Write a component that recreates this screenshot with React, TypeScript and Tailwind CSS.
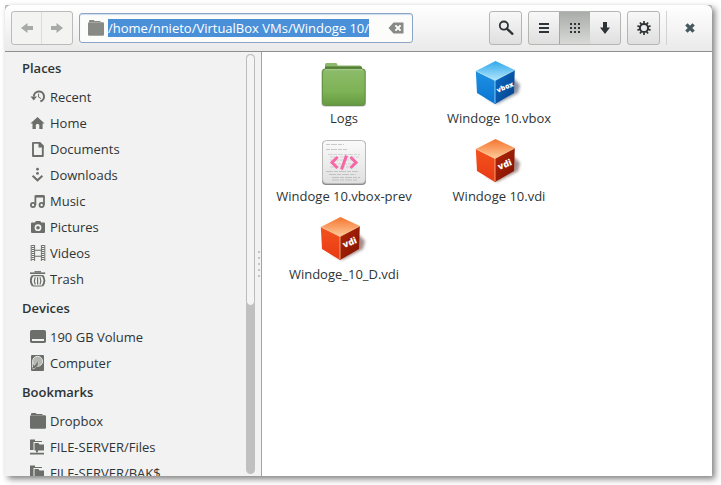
import React, { useEffect, useRef } from "react";

const svg16 = { width: 16, height: 16, viewBox: "0 0 16 16", fill: "none", "aria-hidden": true } as const;

const FolderIcon = ({ color = "#6b6e69" }: { color?: string }) => (
  <svg {...svg16} fill={color}>
    <path d="M1 1.2Q1 0 2 0H5.5Q6.3 0 6.5 1H12.5V2H1Z" />
    <rect y="2.3" width="16" height="13.5" rx="1.2" />
  </svg>
);

const ServerFolderIcon = () => (
  <svg {...svg16} fill="#6b6e69">
    <path d="M0 .5H5V2H12V3H3.5V11H0Z" />
    <path d="M4.5 4H8.5L9.5 5.5H14V11.5H4.5Z" />
    <path d="M6 11H8V13.3H6ZM0 13.8H14V15.6H0Z" />
  </svg>
);

const RecentIcon = () => (
  <svg {...svg16} stroke="#6b6e69">
    <path d="M3.8 7.6A5.1 5.1 0 1 1 10.3 12.4" strokeWidth="2" />
    <path d="M.5 7.4H7L3.7 11.6Z" fill="#6b6e69" stroke="none" />
    <path d="M8.6 4.6V8.2L11 9.5" strokeWidth="1" />
  </svg>
);

const HomeIcon = () => (
  <svg {...svg16} fill="#6b6e69">
    <path d="M7.5 2L14.6 8.4H12.6V14H9.3V10Q9.3 9 7.5 9Q5.8 9 5.8 10V14H2.5V8.4H.4Z" />
  </svg>
);

const DocumentIcon = () => (
  <svg {...svg16}>
    <path d="M3 1.9H9.5L12.8 5.2V15H3Z" stroke="#6b6e69" strokeWidth="1.9" strokeLinejoin="round" />
    <path d="M8.5 1H10L13.5 4.5V6.5H8.5Z" fill="#6b6e69" />
  </svg>
);

const DownloadIcon = () => (
  <svg {...svg16} fill="#6b6e69">
    <circle cx="7.5" cy="2.2" r="1.4" />
    <circle cx="7.5" cy="6.4" r="1.4" />
    <path d="M2.6 8.8L7.5 13.3L12.4 8.8" fill="none" stroke="#6b6e69" strokeWidth="2" />
  </svg>
);

const MusicIcon = () => (
  <svg {...svg16} stroke="#6b6e69" strokeWidth="1.8">
    <circle cx="3" cy="12" r="2.1" />
    <circle cx="11.6" cy="12" r="2.1" />
    <path d="M5.4 12V3.4H14V12" />
    <path d="M5.4 3.2H14" strokeWidth="2.4" />
  </svg>
);

const PictureIcon = () => (
  <svg {...svg16}>
    <path d="M5 3.6L6 2H10.3L11.3 3.6H14Q15 3.6 15 4.6V13Q15 14 14 14H2Q1 14 1 13V4.6Q1 3.6 2 3.6Z" fill="#6b6e69" />
    <circle cx="8" cy="8.7" r="2.6" stroke="#f2f2f2" strokeWidth="1.6" />
  </svg>
);

const VideoIcon = () => (
  <svg {...svg16} stroke="#6b6e69">
    <path d="M1.2 0V16M4.6 0V16M11.4 0V16M14.8 0V16" strokeWidth="1" />
    <path d="M2.9 0V16M13.1 0V16" strokeWidth="2.4" strokeDasharray="1 1" />
    <path d="M4.5 5.2H11.5M4.5 11.2H11.5" strokeWidth="1.1" />
  </svg>
);

const TrashIcon = () => (
  <svg {...svg16} stroke="#6b6e69">
    <path d="M4.5 .8H11" strokeWidth="1.4" />
    <path d="M0 2.2H15.2" strokeWidth="1.6" />
    <path d="M2.6 4.6C0 7.5 .4 12 2.8 15M12.6 4.6C15.2 7.5 14.8 12 12.4 15" strokeWidth="1.9" />
    <path d="M2.4 4.7H12.8M3 15H12.2" strokeWidth="1.2" />
    <path d="M5.2 6.2Q3.6 9.7 5.2 13.4M7.6 6.2V13.4M10 6.2Q11.6 9.7 10 13.4" strokeWidth="1.2" />
  </svg>
);

const VolumeIcon = () => (
  <svg {...svg16}>
    <rect y="1" width="16" height="13" rx="1.8" fill="#6b6e69" />
    <rect x="2" y="10" width="12" height="2" fill="#f2f2f2" />
  </svg>
);

const ComputerIcon = () => (
  <svg {...svg16}>
    <rect x="1" width="13" height="16" rx="1" fill="#6b6e69" />
    <circle cx="7.6" cy="6.3" r="5" fill="#b5b7b3" stroke="#e4e5e3" strokeWidth="1" />
    <path d="M2.4 12.5Q2.2 9 3 7M2.5 13.8L4.8 13.4L8.5 7.5" stroke="#e4e5e3" strokeWidth="1" />
    <path d="M3 13L8.2 6.3L7.5 10.4L4.6 13.6Z" fill="#6b6e69" />
  </svg>
);

const ArrowIcon = ({ flip = false }: { flip?: boolean }) => (
  <svg {...svg16}>
    <path
      d={flip ? "M14 8L7.5 3V6H2V10H7.5V13Z" : "M2 8L8.5 3V6H14V10H8.5V13Z"}
      fill="#a8aaa6"
    />
  </svg>
);

const SearchIcon = () => (
  <svg {...svg16} stroke="#2e3436">
    <circle cx="5.9" cy="5.6" r="4.1" strokeWidth="1.8" />
    <path d="M8.8 8.6L14.4 13.8" strokeWidth="2.4" strokeLinecap="round" />
  </svg>
);

const ListIcon = () => (
  <svg {...svg16} fill="#2e3436">
    <path d="M3 3H13V5H3ZM3 7H13V9H3ZM3 11H13V13H3Z" />
  </svg>
);

const GridIcon = () => (
  <svg {...svg16} fill="#2e3436">
    {[3, 7, 11].map((y) => [3, 7, 11].map((x) => <rect key={`${x}-${y}`} x={x} y={y} width="2" height="2" />))}
  </svg>
);

const DownIcon = () => (
  <svg {...svg16} fill="#2e3436">
    <path d="M6 2H10V7.4H13L8 14L3 7.4H6Z" />
  </svg>
);

const GearIcon = () => (
  <svg {...svg16} stroke="#2e3436">
    <circle cx="8" cy="8" r="4.1" strokeWidth="2" />
    {[0, 36, 72, 108, 144, 180, 216, 252, 288, 324].map((a) => (
      <path key={a} d="M8 1.1V3.8" strokeWidth="1.7" transform={`rotate(${a} 8 8)`} />
    ))}
  </svg>
);

const CloseIcon = () => (
  <svg {...svg16}>
    <path d="M4.4 4.4L11.6 11.6M11.6 4.4L4.4 11.6" stroke="#46595f" strokeWidth="3.4" />
  </svg>
);

const ClearIcon = () => (
  <svg {...svg16}>
    <path d="M.5 8L5.5 2.5H15.5V13.5H5.5Z" fill="#888a85" />
    <path d="M7.4 5.4L12.6 10.6M12.6 5.4L7.4 10.6" stroke="#fff" strokeWidth="2" />
  </svg>
);

const GreenFolder = () => (
  <svg width="48" height="48" viewBox="0 0 48 48" aria-hidden="true">
    <defs>
      <linearGradient id="front" x1="0" y1="0" x2="0" y2="1">
        <stop offset="0" stopColor="#8cbb6a" />
        <stop offset=".6" stopColor="#7fb356" />
        <stop offset="1" stopColor="#669a42" />
      </linearGradient>
    </defs>
    <path d="M5 12V4.500Q5 3 6.500 3H16Q17.500 3 17.500 5.500H40Q42 5.500 42 8V12Z" fill="#8cb86c" />
    <path d="M5 6.500H41Q42 7 42 8.500V12H5Z" fill="#527e34" />
    <rect x="1.500" y="8.500" width="44.500" height="38" rx="3.500" fill="#777" opacity=".55" />
    <rect x="2.500" y="9" width="42.500" height="36.500" rx="3" fill="url(#front)" stroke="#659346" />
    <path d="M5 9.700H42.500" stroke="#acd28f" />
  </svg>
);

const CodeFile = () => (
  <svg width="48" height="48" viewBox="0 0 48 48" aria-hidden="true">
    <defs>
      <linearGradient id="sheet" x1="0" y1="0" x2="0" y2="1">
        <stop offset="0" stopColor="#fafafa" />
        <stop offset="1" stopColor="#e0e0e0" />
      </linearGradient>
    </defs>
    <rect x="2" y="3" width="44" height="44" rx="4" fill="#8a8a8a" />
    <rect x="2.500" y="2.500" width="43" height="43" rx="4" fill="url(#sheet)" stroke="#b9b9b9" />
    <g stroke="#a5a5a5" strokeWidth=".8" opacity=".7">
      <path d="M6 6.500H24M6 11.500H27" strokeDasharray="4 1 6 1" />
      <path d="M8 16.500H40M10 19H39M10 22H36M12 26H38M10 29H32" strokeDasharray="5 1 3 1" opacity=".7" />
      <path d="M6 33.500H38M9 36.500H36M12 39.500H40M12 42H38" strokeDasharray="7 1 4 1" />
    </g>
    <path d="M17.500 19L12 24.500L17.500 30M30.500 19L36 24.500L30.500 30M26.500 17.500L21.500 31.500" fill="none" stroke="#f767a8" strokeWidth="3" />
  </svg>
);

function Cube({ kind }: { kind: "vbox" | "vdi" }) {
  const blue = kind === "vbox";
  const c = blue
    ? { top: "#2fa9ec", hi: "#b4e6fb", left: "#1f92e3", leftEnd: "#0a74d2", right: "#0c6cc5", rightEnd: "#053f87" }
    : { top: "#f4742f", hi: "#ffca98", left: "#f4521e", leftEnd: "#e83a14", right: "#b52607", rightEnd: "#7d1202" };
  return (
    <svg width="48" height="48" viewBox="0 0 48 48" aria-hidden="true">
      <defs>
        <linearGradient id={`${kind}-top`} x1=".5" y1="0" x2=".5" y2="1">
          <stop offset="0" stopColor={c.top} />
          <stop offset="1" stopColor={c.hi} />
        </linearGradient>
        <linearGradient id={`${kind}-left`} x1="0" y1="0" x2="0" y2="1">
          <stop offset="0" stopColor={c.left} />
          <stop offset="1" stopColor={c.leftEnd} />
        </linearGradient>
        <linearGradient id={`${kind}-right`} x1="0" y1="0" x2="1" y2="1">
          <stop offset="0" stopColor={c.right} />
          <stop offset="1" stopColor={c.rightEnd} />
        </linearGradient>
        <filter id={`${kind}-blur`} x="-30%" y="-30%" width="160%" height="160%">
          <feGaussianBlur stdDeviation="1.8" />
        </filter>
      </defs>
      <path d="M10 37L22 44L43 33L45 25L38 18Z" fill={blue ? "#12294a" : "#4a1c12"} opacity=".5" filter={`url(#${kind}-blur)`} />
      <path d="M20.500 1L39.800 10L20 20.500L.8 11Z" fill={`url(#${kind}-top)`} />
      <path d="M.8 11L20 20.500V44L2 33Z" fill={`url(#${kind}-left)`} />
      <path d="M39.800 10L20 20.500V44L39 33Z" fill={`url(#${kind}-right)`} />
      <path d="M1.500 11.200L20 20.500L39.300 10.300M20 20.500V43" fill="none" stroke={c.hi} strokeWidth="1" opacity=".75" />
      <text
        x="30"
        y="29.500"
        textAnchor="middle"
        transform="rotate(-22 30 27)"
        fill="#fff"
        fontFamily="Open Sans, sans-serif"
        fontWeight="800"
        fontSize={blue ? 7 : 9}
      >
        {kind}
      </text>
    </svg>
  );
}

const sections = [
  {
    title: "Places",
    items: [
      { name: "Recent", icon: <RecentIcon /> },
      { name: "Home", icon: <HomeIcon /> },
      { name: "Documents", icon: <DocumentIcon /> },
      { name: "Downloads", icon: <DownloadIcon /> },
      { name: "Music", icon: <MusicIcon /> },
      { name: "Pictures", icon: <PictureIcon /> },
      { name: "Videos", icon: <VideoIcon /> },
      { name: "Trash", icon: <TrashIcon /> },
    ],
  },
  {
    title: "Devices",
    items: [
      { name: "190 GB Volume", icon: <VolumeIcon /> },
      { name: "Computer", icon: <ComputerIcon /> },
    ],
  },
  {
    title: "Bookmarks",
    items: [
      { name: "Dropbox", icon: <FolderIcon /> },
      { name: "FILE-SERVER/Files", icon: <ServerFolderIcon /> },
      { name: "FILE-SERVER/BAK$", icon: <ServerFolderIcon /> },
    ],
  },
];

const files = [
  { name: "Logs", icon: <GreenFolder /> },
  { name: "Windoge 10.vbox", icon: <Cube kind="vbox" /> },
  { name: "Windoge 10.vbox-prev", icon: <CodeFile /> },
  { name: "Windoge 10.vdi", icon: <Cube kind="vdi" /> },
  { name: "Windoge_10_D.vdi", icon: <Cube kind="vdi" /> },
];

function Header() {
  const pathRef = useRef<HTMLInputElement>(null);

  useEffect(() => {
    pathRef.current?.focus();
    pathRef.current?.select();
  }, []);

  const single =
    "flex h-[34px] w-[33px] items-center justify-center rounded-[3px] border border-[#b3b6b1] bg-linear-to-b from-[#f8f8f8] to-[#dfdfdf]";

  return (
    <header className="flex h-[47px] shrink-0 items-center rounded-t-md border-b border-[#8f8f8f] bg-linear-to-b from-white to-[#eaeaea] px-1.5">
      <div className="flex h-[34px] shrink-0 overflow-hidden rounded-[3px] border border-[#b9bcb7] bg-[#f3f3f2]">
        <button aria-label="Back" disabled className="flex w-[30px] items-center justify-center border-r border-[#dcdcda]">
          <ArrowIcon />
        </button>
        <button aria-label="Forward" disabled className="flex w-[30px] items-center justify-center">
          <ArrowIcon flip />
        </button>
      </div>

      <div className="ml-1.5 flex h-[30px] w-[334px] min-w-0 items-center rounded-[3px] border border-[#8ba6c4] bg-[#fcfcfb] px-2 shadow-[inset_0_1px_1px_#cfdeed]">
        <span className="shrink-0">
          <FolderIcon color="#888a85" />
        </span>
        <input
          ref={pathRef}
          aria-label="Location"
          defaultValue="/home/nnieto/VirtualBox VMs/Windoge 10/"
          spellCheck={false}
          className="ml-1 h-[18px] min-w-0 flex-1 bg-transparent leading-[18px] outline-none selection:bg-[#4a90d9] selection:text-white"
        />
        <button aria-label="Clear" className="shrink-0">
          <ClearIcon />
        </button>
      </div>

      <div className="ml-auto flex shrink-0 items-center gap-1.5">
        <button aria-label="Search" className={single}>
          <SearchIcon />
        </button>
        <div className="flex h-[34px] overflow-hidden rounded-[3px] border border-[#b3b6b1] bg-linear-to-b from-[#f8f8f8] to-[#dfdfdf]">
          <button aria-label="List view" className="flex w-[30px] items-center justify-center">
            <ListIcon />
          </button>
          <button
            aria-label="Icon view"
            aria-pressed="true"
            className="flex w-[31px] items-center justify-center border-l border-[#a5a8a3] bg-linear-to-b from-[#a9aca8] to-[#d9dad8]"
          >
            <GridIcon />
          </button>
          <button aria-label="View options" className="flex w-[30px] items-center justify-center">
            <DownIcon />
          </button>
        </div>
        <button aria-label="Settings" className={single}>
          <GearIcon />
        </button>
        <div className="h-[34px] w-px bg-[#d2d2d2]" />
        <button aria-label="Close" className="flex h-[34px] w-[33px] items-center justify-center">
          <CloseIcon />
        </button>
      </div>
    </header>
  );
}

function Sidebar() {
  return (
    <aside className="flex w-64 shrink-0 bg-[#f2f2f2]">
      <nav className="min-w-0 flex-1 overflow-hidden">
        {sections.map((section) => (
          <section key={section.title}>
            <h2 className="h-8 pl-[17px] font-semibold leading-8">{section.title}</h2>
            <ul>
              {section.items.map((item) => (
                <li key={item.name}>
                  <a href="#" className="flex h-[26px] items-center gap-1 pl-[25px] leading-[26px]">
                    {item.icon}
                    {item.name}
                  </a>
                </li>
              ))}
            </ul>
          </section>
        ))}
      </nav>
      <div className="mt-0.5 mb-0.5 w-[9px] shrink-0 rounded-full bg-[#c0c0c0]">
        <div className="h-3/5 rounded-full border border-[#bcbcbc] bg-[#f4f4f4]" />
      </div>
      <div className="flex w-1.5 shrink-0 flex-col items-end justify-center gap-1 pr-px">
        {[0, 1, 2, 3, 4].map((i) => (
          <span key={i} className="size-0.5 bg-[#c4c4c4]" />
        ))}
      </div>
    </aside>
  );
}

export default function App() {
  return (
    <div className="h-screen bg-white pt-[5px] pr-[9px] pb-[9px] pl-[5px] font-['Open_Sans','Noto_Sans',sans-serif] text-[13px] text-[#2e3436]">
      <div className="flex h-full flex-col rounded-t-[2px] bg-[#b0b0b0] shadow-[3px_3px_6px_rgba(0,0,0,0.5)]">
        <Header />
        <div className="flex min-h-0 flex-1">
          <Sidebar />
          <main className="min-w-0 flex-1 overflow-hidden border-l border-[#a3a3a3] bg-white pt-2 pl-[5px]">
            <ul className="grid grid-cols-[repeat(auto-fill,154px)] gap-x-px gap-y-2.5">
              {files.map((file) => (
                <li key={file.name} className="flex flex-col items-center">
                  {file.icon}
                  <span className="leading-5">{file.name}</span>
                </li>
              ))}
            </ul>
          </main>
        </div>
      </div>
    </div>
  );
}
